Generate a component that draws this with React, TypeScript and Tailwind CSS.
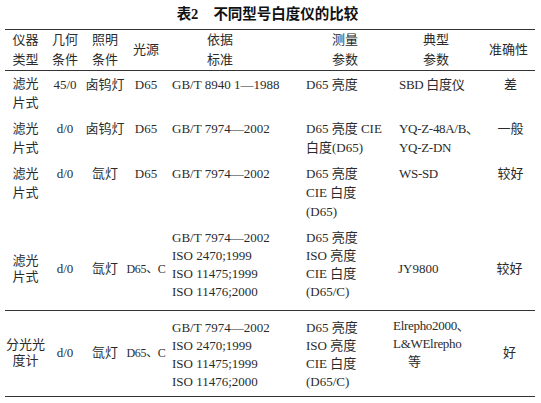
const font = { fontFamily: '"Liberation Serif", "Noto Sans CJK SC", serif' };

type Row = {
    type: string[];
    geo: string;
    light: string;
    source: string;
    basis: string[];
    params: string[];
    model: string[];
    accuracy: string;
};

const standards = [
    'GB/T 7974—2002',
    'ISO 2470;1999',
    'ISO 11475;1999',
    'ISO 11476;2000',
];

const topRows: Row[] = [
    {
        type: ['滤光', '片式'],
        geo: '45/0',
        light: '卤钨灯',
        source: 'D65',
        basis: ['GB/T 8940 1—1988'],
        params: ['D65 亮度'],
        model: ['SBD 白度仪'],
        accuracy: '差',
    },
    {
        type: ['滤光', '片式'],
        geo: 'd/0',
        light: '卤钨灯',
        source: 'D65',
        basis: ['GB/T 7974—2002'],
        params: ['D65 亮度 CIE', '白度(D65)'],
        model: ['YQ-Z-48A/B、', 'YQ-Z-DN'],
        accuracy: '一般',
    },
    {
        type: ['滤光', '片式'],
        geo: 'd/0',
        light: '氙灯',
        source: 'D65',
        basis: ['GB/T 7974—2002'],
        params: ['D65 亮度', 'CIE 白度', '(D65)'],
        model: ['WS-SD'],
        accuracy: '较好',
    },
];

function Lines({ items }: { items: string[] }) {
    return (
        <>
            {items.map((item, i) => (
                <div key={i} className="whitespace-nowrap">
                    {item}
                </div>
            ))}
        </>
    );
}

export default function App() {
    return (
        <div className="h-[403px] w-[541px] bg-white text-[#2b2b2b]" style={font}>
            <div className="flex h-[29px] items-center justify-center pr-[6px] text-[14.5px] font-bold text-[#111]">
                <span>表2</span>
                <span className="ml-[15px]">不同型号白度仪的比较</span>
            </div>
            <table className="ml-[5px] w-[530px] table-fixed border-collapse text-[13px] whitespace-nowrap">
                <colgroup>
                    <col className="w-[41px]" />
                    <col className="w-[38px]" />
                    <col className="w-[42px]" />
                    <col className="w-[40px]" />
                    <col className="w-[134px]" />
                    <col className="w-[90px]" />
                    <col className="w-[90px]" />
                    <col className="w-[55px]" />
                </colgroup>
                <thead>
                    <tr className="h-[39px] border-t-[1.5px] border-b border-[#333] leading-[20px]">
                        <th className="text-center font-normal">仪器<br />类型</th>
                        <th className="text-center font-normal">几何<br />条件</th>
                        <th className="text-center font-normal">照明<br />条件</th>
                        <th className="text-center font-normal">光源</th>
                        <th className="pr-[26px] text-center font-normal">依据<br />标准</th>
                        <th className="text-center font-normal">测量<br />参数</th>
                        <th className="pl-[2px] text-center font-normal">典型<br />参数</th>
                        <th className="pl-[2px] text-center font-normal">准确性</th>
                    </tr>
                </thead>
                <tbody className="leading-[19px]">
                    {topRows.map((row, i) => (
                        <tr key={i} className="align-top">
                            <td className={`text-center ${i === 0 ? 'pt-[3px]' : 'pt-[4px]'} pb-[3px]`}>
                                <Lines items={row.type} />
                            </td>
                            <td className="pt-[4px] text-center">{row.geo}</td>
                            <td className="pt-[4px] text-center">{row.light}</td>
                            <td className="pt-[4px] text-center">{row.source}</td>
                            <td className="pt-[4px] pl-[6px]">
                                <Lines items={row.basis} />
                            </td>
                            <td className="pt-[4px] pl-[6px]">
                                <Lines items={row.params} />
                            </td>
                            <td className="pt-[4px] pl-[9px] tracking-[-0.3px]">
                                <Lines items={row.model} />
                            </td>
                            <td className="pt-[4px] pl-[6px] text-center">{row.accuracy}</td>
                        </tr>
                    ))}
                    <tr className="h-[89px] align-middle leading-[18px]">
                        <td className="pt-[8px] text-center leading-[16px]">
                            滤光<br />片式
                        </td>
                        <td className="pt-[8px] text-center">d/0</td>
                        <td className="pt-[8px] text-center">氙灯</td>
                        <td className="pt-[8px] text-center text-[12px] tracking-[-0.3px]">D65、C</td>
                        <td className="pl-[6px]">
                            <Lines items={standards} />
                        </td>
                        <td className="pl-[6px]">
                            <Lines items={['D65 亮度', 'ISO 亮度', 'CIE 白度', '(D65/C)']} />
                        </td>
                        <td className="pt-[8px] pl-[8px]">JY9800</td>
                        <td className="pt-[8px] pl-[4px] text-center">较好</td>
                    </tr>
                    <tr className="h-[86px] border-t-[1.5px] border-b-[1.5px] border-[#333] align-middle leading-[18px]">
                        <td className="text-center leading-[16px]">
                            分光光<br />度计
                        </td>
                        <td className="text-center">d/0</td>
                        <td className="text-center">氙灯</td>
                        <td className="text-center text-[12px] tracking-[-0.3px]">D65、C</td>
                        <td className="pt-[4px] pl-[6px]">
                            <Lines items={standards} />
                        </td>
                        <td className="pt-[4px] pl-[6px]">
                            <Lines items={['D65 亮度', 'ISO 亮度', 'CIE 白度', '(D65/C)']} />
                        </td>
                        <td className="pl-[3px] align-top pt-[6px] tracking-[-0.3px]">
                            <Lines items={['Elrepho2000、', 'L&WElrepho']} />
                            <div className="pl-[15px]">等</div>
                        </td>
                        <td className="pl-[4px] text-center">好</td>
                    </tr>
                </tbody>
            </table>
        </div>
    );
}
